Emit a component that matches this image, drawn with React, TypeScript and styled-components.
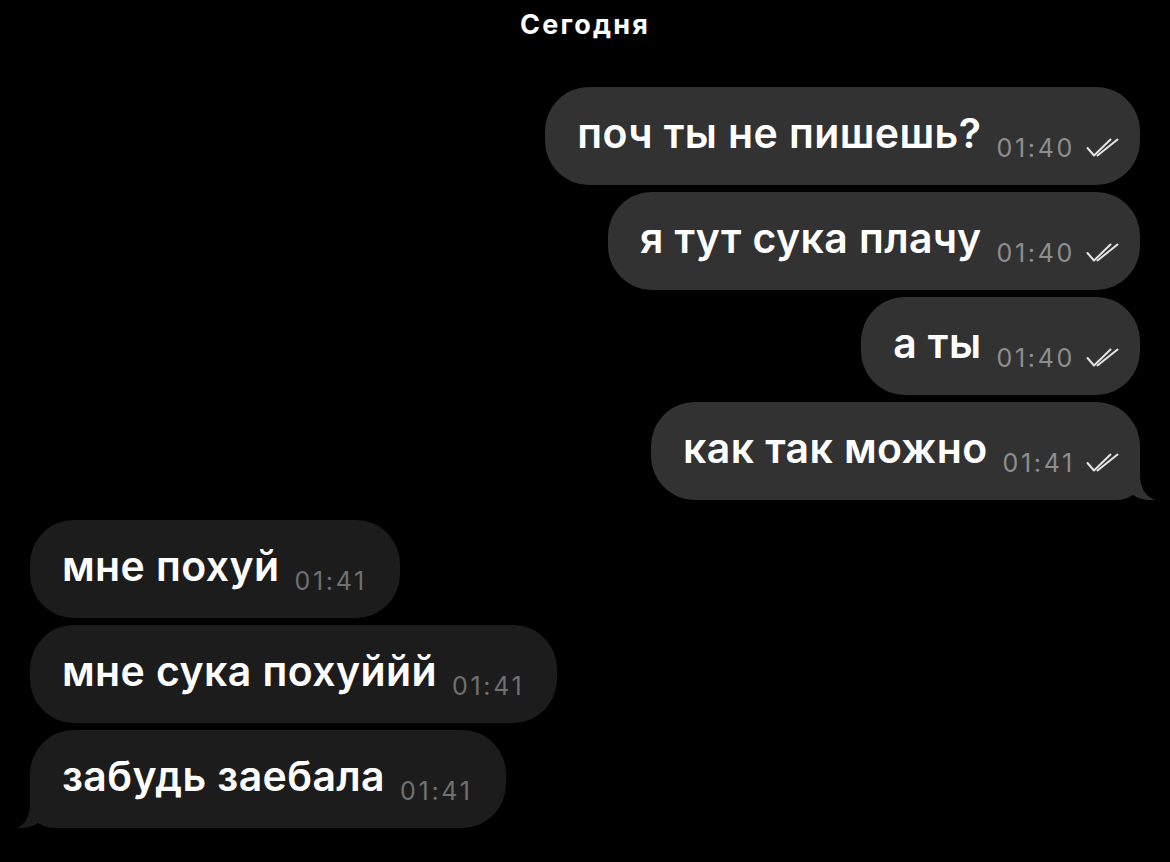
import styled, { createGlobalStyle } from "styled-components";

const GlobalStyle = createGlobalStyle`
  html, body {
    margin: 0;
    padding: 0;
    background: #000;
  }
  body {
    font-family: Inter, "Noto Sans", "Liberation Sans", sans-serif;
    -webkit-font-smoothing: antialiased;
  }
`;

const Screen = styled.div`
  width: 1170px;
  height: 862px;
  background: #000;
  display: flex;
  flex-direction: column;
  padding: 0 30px;
  box-sizing: border-box;
  overflow: hidden;
`;

const DateLabel = styled.div`
  align-self: center;
  margin: 10px 0 0 0;
  height: 30px;
  line-height: 30px;
  color: #fff;
  font-size: 27px;
  font-weight: 700;
  letter-spacing: 2.2px;
`;

const Thread = styled.div`
  display: flex;
  flex-direction: column;
  gap: 7px;
  margin-top: 47px;
`;

const Group = styled.div<{ $out: boolean }>`
  display: flex;
  flex-direction: column;
  gap: 7px;
  align-items: ${(p) => (p.$out ? "flex-end" : "flex-start")};
  margin-bottom: ${(p) => (p.$out ? "13px" : "0")};
`;

const Bubble = styled.div<{ $out: boolean; $tail: boolean }>`
  position: relative;
  display: flex;
  align-items: center;
  height: 98px;
  box-sizing: border-box;
  padding: ${(p) => (p.$out ? "0 20px 0 32px" : "0 33px 0 32px")};
  border-radius: 44px;
  background: ${(p) => (p.$out ? "#323232" : "#1c1c1c")};
  ${(p) =>
    p.$tail && p.$out ? "border-bottom-right-radius: 24px;" : ""}
  ${(p) =>
    p.$tail && !p.$out ? "border-bottom-left-radius: 24px;" : ""}
`;

const Text = styled.span`
  color: #fff;
  font-size: 41px;
  font-weight: 600;
  letter-spacing: 0.4px;
  line-height: 48px;
  white-space: nowrap;
  margin-top: -6px;
`;

const Meta = styled.span<{ $out: boolean }>`
  align-self: flex-end;
  display: flex;
  align-items: center;
  gap: 11px;
  margin: 0 0 27px 15px;
  color: ${(p) => (p.$out ? "#8e8e8e" : "#707070")};
  font-size: 25px;
  line-height: 20px;
  letter-spacing: 2.7px;
  font-weight: 400;
`;

const TailOut = styled.svg`
  position: absolute;
  right: -15px;
  bottom: 0;
  width: 42px;
  height: 40px;
`;

const TailIn = styled.svg`
  position: absolute;
  left: -13px;
  bottom: 0;
  width: 42px;
  height: 40px;
`;

function Ticks() {
  return (
    <svg width="34" height="20" viewBox="0 0 34 20" fill="none">
      <path
        d="M1.5 10 L8 17.5 L24.5 1.5"
        stroke="#e4e4e4"
        strokeWidth="2"
        strokeLinecap="round"
        strokeLinejoin="round"
      />
      <path
        d="M11.5 17.5 L31.5 1.5"
        stroke="#e4e4e4"
        strokeWidth="2"
        strokeLinecap="round"
      />
    </svg>
  );
}

type Msg = { text: string; time: string };

const outgoing: Msg[] = [
  { text: "поч ты не пишешь?", time: "01:40" },
  { text: "я тут сука плачу", time: "01:40" },
  { text: "а ты", time: "01:40" },
  { text: "как так можно", time: "01:41" },
];

const incoming: Msg[] = [
  { text: "мне похуй", time: "01:41" },
  { text: "мне сука похуййй", time: "01:41" },
  { text: "забудь заебала", time: "01:41" },
];

function MessageGroup({ items, out }: { items: Msg[]; out: boolean }) {
  return (
    <Group $out={out}>
      {items.map((m, i) => {
        const last = i === items.length - 1;
        return (
          <Bubble key={i} $out={out} $tail={last}>
            <Text>{m.text}</Text>
            <Meta $out={out}>
              {m.time}
              {out && <Ticks />}
            </Meta>
            {last && out && (
              <TailOut viewBox="0 0 42 40">
                <path
                  d="M0 0 H27 V14 C27 28 32 36 42 40 C33 40.5 26 39 20 35 C14 39 8 40 0 40 Z"
                  fill="#323232"
                />
              </TailOut>
            )}
            {last && !out && (
              <TailIn viewBox="0 0 42 40">
                <path
                  d="M42 0 H13 V14 C13 28 9 36 0 40 C8 40.5 15 39 21 35 C27 39 34 40 42 40 Z"
                  fill="#1c1c1c"
                />
              </TailIn>
            )}
          </Bubble>
        );
      })}
    </Group>
  );
}

export default function App() {
  return (
    <>
      <GlobalStyle />
      <Screen>
        <DateLabel>Сегодня</DateLabel>
        <Thread>
          <MessageGroup items={outgoing} out />
          <MessageGroup items={incoming} out={false} />
        </Thread>
      </Screen>
    </>
  );
}
